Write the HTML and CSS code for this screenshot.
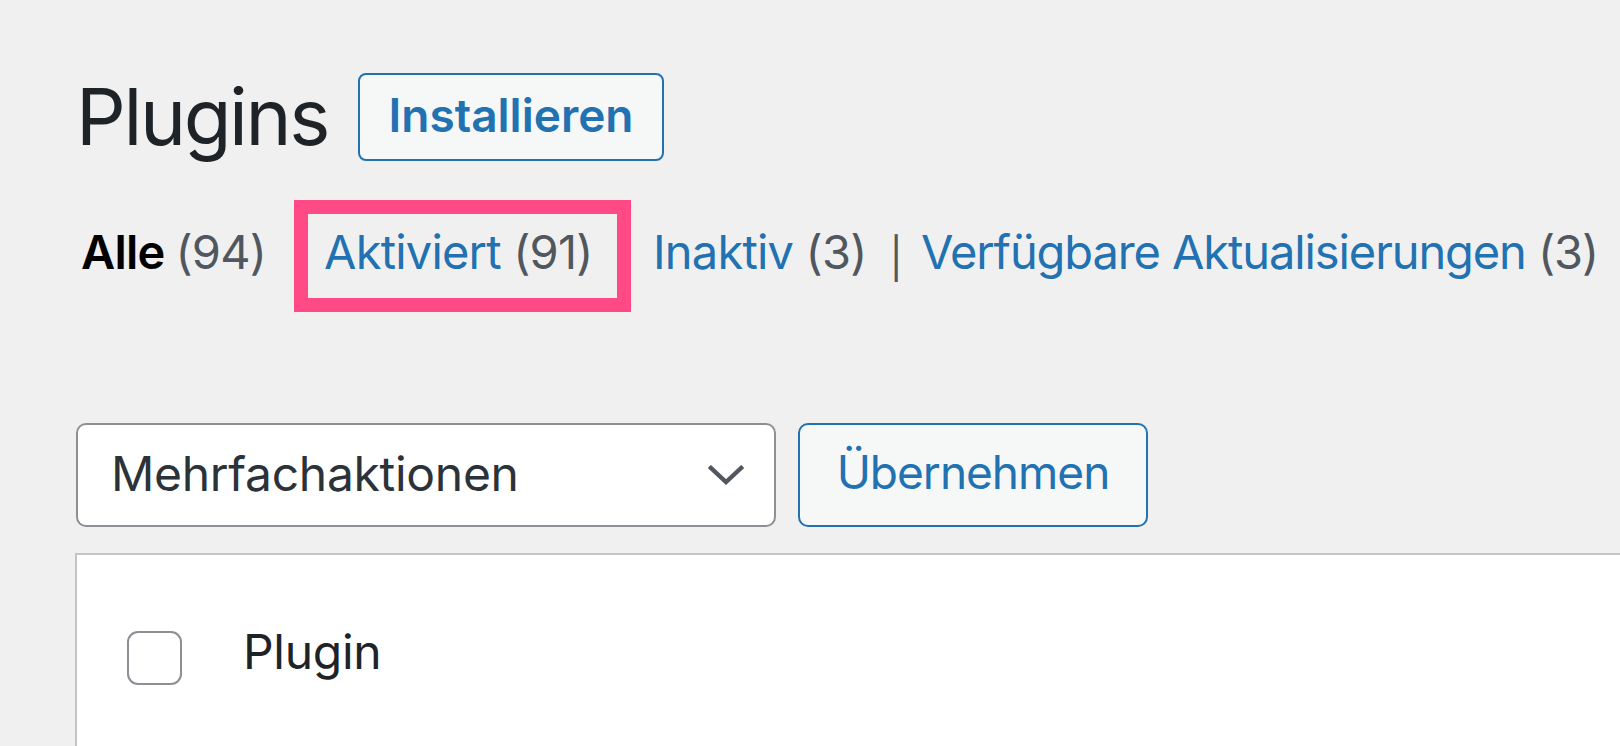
FILE: index.html
```html
<!DOCTYPE html>
<html lang="de">
<head>
<meta charset="utf-8">
<title>Plugins</title>
<link rel="stylesheet" href="styles.css">
</head>
<body>
<div class="wrap">
  <div class="page-header">
    <h1 class="page-title">Plugins</h1>
    <a class="page-title-action" href="#">Installieren</a>
  </div>
  <ul class="subsubsub">
    <li class="item"><a class="current" href="#">Alle <span class="count">(94)</span></a></li>
    <li class="item highlighted"><a href="#">Aktiviert <span class="count">(91)</span></a></li>
    <li class="item"><a href="#">Inaktiv <span class="count">(3)</span></a></li>
    <li class="sep">|</li>
    <li class="item item-updates"><a href="#">Verfügbare Aktualisierungen <span class="count">(3)</span></a></li>
  </ul>
  <div class="tablenav">
    <div class="bulk-select">
      <span class="bulk-label">Mehrfachaktionen</span>
      <svg class="chevron" viewBox="0 0 38 22" width="36" height="21"><path d="M3 3 L19 18 L35 3" fill="none" stroke="#50575e" stroke-width="4.5" stroke-linecap="square"/></svg>
    </div>
    <button class="button-apply" type="button">Übernehmen</button>
  </div>
  <div class="plugins-table">
    <div class="table-head">
      <span class="checkbox"></span>
      <span class="col-name">Plugin</span>
    </div>
  </div>
</div>
</body>
</html>
```
FILE: styles.css
```css
html, body {
  margin: 0;
  padding: 0;
  background: #f0f0f1;
  height: 100%;
  overflow: hidden;
}
body {
  font-family: Inter, "Noto Sans", "Liberation Sans", sans-serif;
  color: #1d2327;
}
.wrap {
  padding-left: 76px;
  padding-top: 73px;
  display: flex;
  flex-direction: column;
  height: calc(100% - 73px);
}
.page-header {
  display: flex;
  align-items: center;
  gap: 30px;
}
.page-title {
  margin: 0;
  font-size: 78px;
  font-weight: 400;
  line-height: 88px;
  color: #1d2327;
  letter-spacing: -2.4px;
}
.page-title-action {
  box-sizing: border-box;
  height: 88px;
  width: 306px;
  display: flex;
  align-items: center;
  justify-content: center;
  border: 2px solid #2271b1;
  border-radius: 8px;
  background: #f6f7f7;
  color: #2271b1;
  font-size: 46px;
  font-weight: 600;
  text-decoration: none;
  padding-bottom: 4px;
}
.subsubsub {
  list-style: none;
  margin: 39px 0 0 0;
  padding: 0 0 0 5px;
  display: flex;
  align-items: center;
  font-size: 47px;
  height: 112px;
  letter-spacing: -0.8px;
}
.subsubsub li {
  flex-shrink: 0;
}
.subsubsub a {
  color: #2271b1;
  text-decoration: none;
  white-space: nowrap;
}
.subsubsub a.current {
  color: #000;
  font-weight: 600;
}
.count {
  color: #50575e;
  font-weight: 400;
}
.item {
  margin-right: 28px;
  margin-bottom: 9px;
}
.item-updates {
  letter-spacing: -1.1px;
  margin-right: 0;
}
.highlighted {
  box-sizing: border-box;
  height: 112px;
  width: 337px;
  border: 14px solid #ff4a86;
  display: flex;
  align-items: center;
  padding-left: 16px;
  padding-bottom: 9px;
  margin-bottom: 0;
  margin-right: 22px;
}
.sep {
  color: #50575e;
  font-size: 40px;
  margin-right: 19px;
  margin-left: -5px;
  padding-top: 4px;
}
.tablenav {
  margin-top: 111px;
  display: flex;
  gap: 22px;
}
.bulk-select {
  box-sizing: border-box;
  width: 700px;
  height: 104px;
  background: #fff;
  border: 2px solid #8c8f94;
  border-radius: 10px;
  display: flex;
  align-items: center;
  justify-content: space-between;
  padding: 0 30px 4px 33px;
  font-size: 48px;
  letter-spacing: -0.3px;
  color: #2c3338;
}
.chevron {
  display: block;
  margin-top: 4px;
}
.button-apply {
  box-sizing: border-box;
  width: 350px;
  height: 104px;
  background: #f6f7f7;
  border: 2px solid #2271b1;
  border-radius: 10px;
  color: #2271b1;
  font-family: inherit;
  font-size: 46px;
  font-weight: 400;
  letter-spacing: -1px;
  padding: 0 0 6px 0;
}
.plugins-table {
  margin-top: 26px;
  flex: 1;
  background: #fff;
  border-top: 2px solid #c3c4c7;
  border-left: 2px solid #c3c4c7;
  margin-left: -1px;
}
.table-head {
  display: flex;
  align-items: center;
  padding-top: 67px;
  padding-left: 50px;
}
.checkbox {
  box-sizing: border-box;
  width: 55px;
  height: 54px;
  border: 2px solid #8c8f94;
  border-radius: 11px;
  background: #fff;
}
.col-name {
  margin-left: 61px;
  margin-bottom: 12px;
  font-size: 48px;
  letter-spacing: -0.3px;
  color: #1d2327;
}
```
